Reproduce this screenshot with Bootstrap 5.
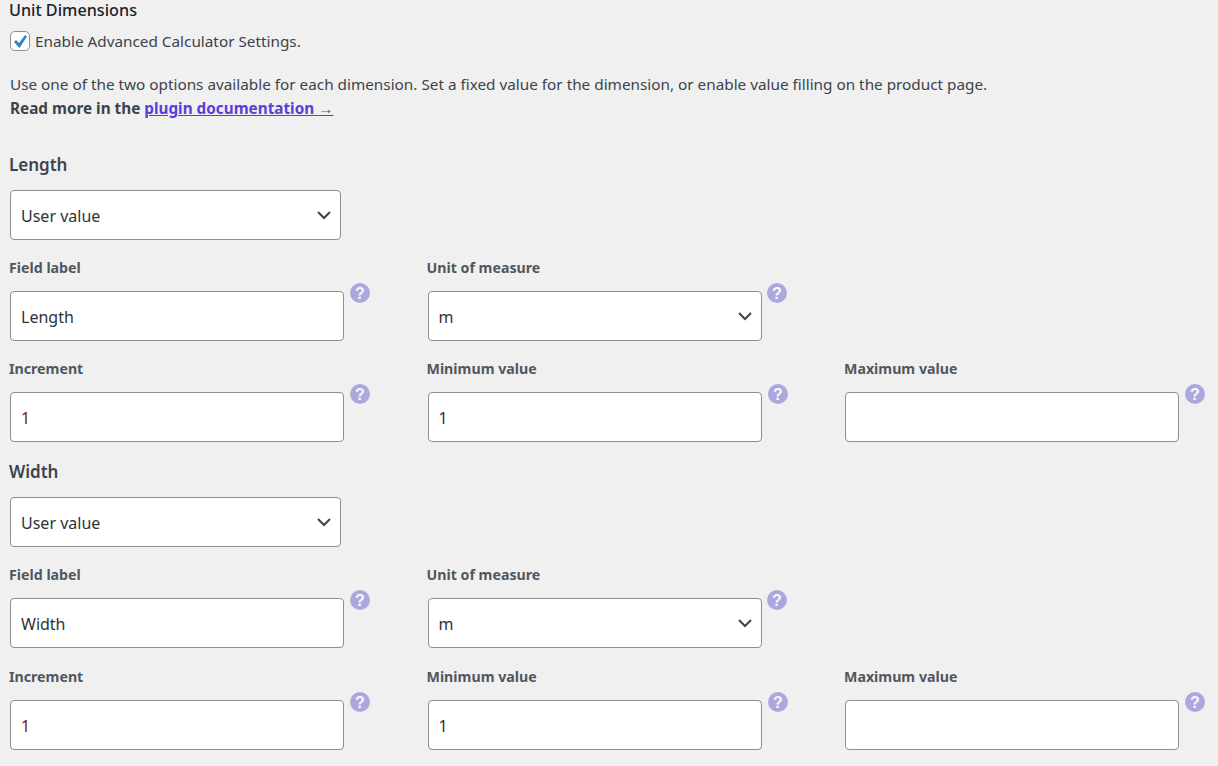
<!DOCTYPE html>
<html lang="en">
<head>
    <meta charset="UTF-8">
    <title>Unit Dimensions</title>
    <link href="https://cdn.jsdelivr.net/npm/bootstrap@5.3.0/dist/css/bootstrap.min.css" rel="stylesheet">
    <style>
        body {
            background: #f0f0f1;
            color: #3c434a;
            font-family: "Noto Sans", "Open Sans", sans-serif;
            font-size: 15.3px;
            overflow: hidden;
        }
        .page-wrap { padding: 0 0 0 9px; }
        .unit-title { font-size: 16.2px; font-weight: 500; color: #1d2327; line-height: 20px; margin: 0; }
        .adv-check { display: flex; align-items: center; gap: 5px; height: 22px; margin: 10px 0 0 1px; }
        .adv-check input {
            appearance: none; width: 20px; height: 20px; margin: 0;
            border: 1px solid #8c8f94; border-radius: 5px; background: #fff;
        }
        .adv-check .tick { position: absolute; left: 13px; top: 35px; }
        .intro { margin: 20px 0 0 1px; line-height: 24px; }
        .intro a { color: #5b3ddb; font-weight: 700; }
        .doc-arrow { font-family: "Liberation Sans", sans-serif; font-weight: 400; line-height: 0; }
        .dim-title { font-size: 17px; font-weight: 600; line-height: 24px; color: #3c434a; margin: 0; }
        .dim-length { margin-top: 33px; }
        .dim-width { margin-top: 18px; }
        .mode-select { width: 331px; margin: 13px 0 0 1px; }
        .wc-input, .wc-select {
            height: 50px; border: 1px solid #8c8f94; border-radius: 4px; background-color: #fff;
            color: #2c3338; font-size: 16px; padding: 2px 10px 0; box-shadow: none;
        }
        .wc-select {
            background-image: url("data:image/svg+xml,%3csvg xmlns='http://www.w3.org/2000/svg' viewBox='0 0 14 9'%3e%3cpath fill='none' stroke='%23444' stroke-width='2' d='M1 1l6 6 6-6'/%3e%3c/svg%3e");
            background-position: right 9px center; background-size: 14px 9px;
        }
        .field-grid { display: grid; grid-template-columns: repeat(3, 417.5px); }
        .field-name { display: block; font-size: 14.2px; font-weight: 700; color: #50575e; line-height: 20px; margin-bottom: 13px; }
        .field-row { display: flex; gap: 6px; padding-left: 1px; }
        .field-row .wc-input, .field-row .wc-select { width: 334px; flex: none; }
        .field-row .wc-select + .help-tip { margin-left: -1px; }
        .first-line { margin-top: 18px; }
        .next-line { margin-top: 18px; }
        .dim-width ~ .next-line { margin-top: 19px; }
        .value-red { color: #7a1a10; }
        .help-tip { flex: none; width: 20px; height: 20px; margin-top: -8px; }
    </style>
</head>
<body>
<div class="page-wrap">
    <h2 class="unit-title">Unit Dimensions</h2>
    <label class="adv-check">
        <input type="checkbox" checked>
        <svg class="tick" width="15" height="14" viewBox="0 0 15 14"><path fill="#3582c4" d="M1 7l2-2 3 3 6-8 2 1.500-7.500 11.500z"/></svg>
        Enable Advanced Calculator Settings.
    </label>
    <p class="intro mb-0">Use one of the two options available for each dimension. Set a fixed value for the dimension, or enable value filling on the product page.<br>
        <strong>Read more in the <a href="#">plugin documentation <span class="doc-arrow">→</span></a></strong></p>

    <section id="dimensions"></section>
</div>

<script src="https://cdn.jsdelivr.net/npm/bootstrap@5.3.0/dist/js/bootstrap.bundle.min.js"></script>
<script>
    // both dimension blocks are the same apart from the name
    const helpIcon = '<svg class="help-tip" viewBox="0 0 20 20"><circle cx="10" cy="10" r="10" fill="#aca8dd"/><text x="10" y="16" text-anchor="middle" fill="#f8f8fc" font-family="Liberation Sans" font-weight="700" font-size="16">?</text></svg>';

    function field(label, control) {
        return `<div><label class="field-name">${label}</label><div class="field-row">${control}${helpIcon}</div></div>`;
    }

    function dimension(name, cls) {
        return `
        <h3 class="dim-title ${cls}">${name}</h3>
        <select class="form-select wc-select mode-select"><option>User value</option></select>
        <div class="field-grid first-line">
            ${field('Field label', `<input class="form-control wc-input" value="${name}">`)}
            ${field('Unit of measure', '<select class="form-select wc-select"><option>m</option></select>')}
        </div>
        <div class="field-grid next-line">
            ${field('Increment', '<input class="form-control wc-input value-red" value="1">')}
            ${field('Minimum value', '<input class="form-control wc-input" value="1">')}
            ${field('Maximum value', '<input class="form-control wc-input">')}
        </div>`;
    }

    document.getElementById('dimensions').innerHTML = dimension('Length', 'dim-length') + dimension('Width', 'dim-width');
</script>
</body>
</html>
